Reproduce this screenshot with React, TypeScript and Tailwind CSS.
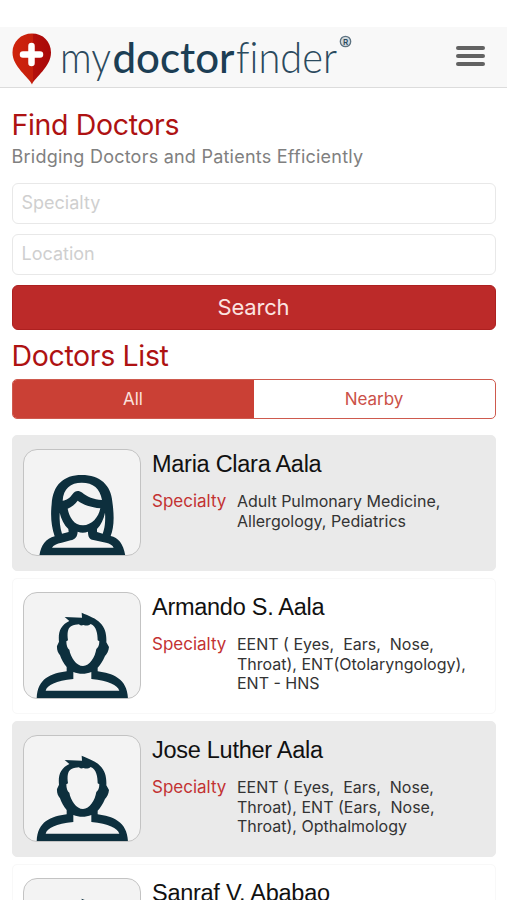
type Doctor = {
  name: string;
  specialties: string[];
  female?: boolean;
};

const doctors: Doctor[] = [
  {
    name: "Maria Clara Aala",
    specialties: ["Adult Pulmonary Medicine,", "Allergology, Pediatrics"],
    female: true,
  },
  {
    name: "Armando S. Aala",
    specialties: [
      "EENT ( Eyes,  Ears,  Nose,",
      "Throat), ENT(Otolaryngology),",
      "ENT - HNS",
    ],
  },
  {
    name: "Jose Luther Aala",
    specialties: [
      "EENT ( Eyes,  Ears,  Nose,",
      "Throat), ENT (Ears,  Nose,",
      "Throat), Opthalmology",
    ],
  },
  { name: "Sanraf V. Ababao", specialties: [] },
];

const FemaleAvatar = () => (
  <svg viewBox="72 60 348 315" className="w-full h-full">
    <path
      fill="#0d2f3d"
      d="M118 378C122 348 137 325 164 319C154 290 151 258 155 222C159 165 190 135 245 135C300 135 333 165 337 215C344 265 341 295 332 318C355 323 371 342 376 378Z"
    />
    <g fill="#f3f3f3">
      <path d="M188 212C190 175 212 158 245 158C280 158 300 175 306 210C280 208 262 200 247 188C235 179 225 182 218 192C208 206 200 210 188 212Z" />
      <path d="M203 236C215 231 225 222 233 212C250 224 272 232 301 235C296 262 275 286 249 286C222 286 208 262 203 236Z" />
      <path d="M179 248C184 268 192 284 205 297L206 306L186 311C180 292 178 272 179 248Z" />
      <path d="M315 248C317 275 314 295 308 311L291 306V297C303 284 311 268 315 248Z" />
      <path d="M156 353C160 345 170 341 185 338L212 331C226 328 232 320 233 305C243 309 253 309 264 305C264 320 268 328 280 330L318 338C330 341 338 345 341 353Z" />
    </g>
  </svg>
);

const MaleAvatar = () => (
  <svg viewBox="70 69 348 315" className="w-full h-full">
    <path
      fill="#0d2f3d"
      d="M192 141L244 143L243 128C265 137 287 146 298 158C314 173 318 193 317 217L325 231C324 243 319 252 313 258C306 274 299 285 291 293V304C335 310 380 325 382 386H108C110 325 150 311 198 304V291C189 281 182 268 178 256C172 248 168 240 169 228L175 215C172 185 180 166 206 153Z"
    />
    <g fill="#f3f3f3">
      <path d="M211 169C220 163 228 165 235 163C239 168 243 166 249 165C256 168 264 167 270 162C287 169 291 190 291 211L296 214C296 226 292 234 287 237C283 262 267 288 247 288C227 288 210 262 206 239C200 236 197 226 197 214L202 211C199 190 201 175 211 169Z" />
      <path d="M135 362C140 345 165 333 218 327V306C235 313 255 313 272 306V327C325 333 350 345 356 362Z" />
    </g>
  </svg>
);

const Logo = () => (
  <svg width="345" height="60" viewBox="10 27 345 60" fill="#2b4a5e">
    <defs>
      <linearGradient id="pin" x1="0" x2="1" y1="0" y2="0">
        <stop offset="0" stopColor="#cf240c" />
        <stop offset="0.52" stopColor="#c61f0c" />
        <stop offset="0.54" stopColor="#b30f0b" />
        <stop offset="1" stopColor="#a90809" />
      </linearGradient>
    </defs>
    <path
      fill="url(#pin)"
      d="M32 84.5C29 77 12.5 67 12.5 52.5C12.5 41.5 21 33.5 32 33.5S51 41.5 51 52.5C51 67 35 77 32 84.5Z"
    />
    <path
      d="M31.500 46V63M23 54.500H40"
      stroke="#fff"
      strokeWidth="6.500"
      strokeLinecap="round"
    />
    <g
      fontFamily="Lato, sans-serif"
      fontSize="43"
      style={{ fontVariantLigatures: "none" }}
    >
      <text x="60" y="73" fontWeight="300" textLength="51" lengthAdjust="spacingAndGlyphs">
        my
      </text>
      <text x="112.500" y="73" fontWeight="500" fill="#1c3e54" textLength="122" lengthAdjust="spacingAndGlyphs">
        doctor
      </text>
      <text x="236" y="73" fontWeight="300" textLength="101" lengthAdjust="spacingAndGlyphs">
        finder
      </text>
    </g>
    <circle cx="345.500" cy="41.500" r="5.200" fill="#d3dade" stroke="#5d7280" strokeWidth="1.300" />
    <text x="345.500" y="44.500" textAnchor="middle" fontFamily="Inter, sans-serif" fontWeight="600" fontSize="8">
      R
    </text>
  </svg>
);

const Heading = ({ children }: { children: string }) => (
  <h2 className="text-[28.5px] leading-9 tracking-[-0.35px] text-[#ae1212] whitespace-nowrap">
    {children}
  </h2>
);

const DoctorCard = ({ doctor, shaded }: { doctor: Doctor; shaded: boolean }) => (
  <div
    className={`flex h-[136px] shrink-0 rounded-[5px] border pl-[10px] pt-[13px] ${
      shaded ? "bg-[#eaeaea] border-[#eaeaea]" : "bg-white border-[#f8f8f8]"
    }`}
  >
    <div className="h-[107px] w-[118px] shrink-0 overflow-hidden rounded-[14px] border-[1.5px] border-[#c3c3c3] bg-[#f3f3f3]">
      {doctor.female ? <FemaleAvatar /> : <MaleAvatar />}
    </div>
    <div className="ml-[11.5px] whitespace-nowrap">
      <p className="font-['Liberation_Sans',sans-serif] text-[23.5px] leading-[30px] tracking-[-0.27px] text-[#111]">
        {doctor.name}
      </p>
      <div className="mt-[12px] flex">
        <p className="w-[85px] text-[17px] leading-5 text-[#c33232]">Specialty</p>
        <div className="mt-px text-[16px] leading-[19.5px] text-[#333] whitespace-pre">
          {doctor.specialties.map((line) => (
            <p key={line}>{line}</p>
          ))}
        </div>
      </div>
    </div>
  </div>
);

export default function App() {
  return (
    <div className="flex h-[900px] w-[507px] flex-col overflow-hidden bg-white font-[Inter,sans-serif]">
      {/* Header */}
      <header className="mt-[27px] flex h-[61px] shrink-0 items-start justify-between border-b border-[#dcdcdc] bg-[#f8f8f8] pl-[10px] pr-[22px]">
        <Logo />
        <button aria-label="Menu" className="mt-[19px] flex flex-col gap-1">
          <span className="h-1 w-[29px] rounded-full bg-[#626262]" />
          <span className="h-1 w-[29px] rounded-full bg-[#626262]" />
          <span className="h-1 w-[29px] rounded-full bg-[#626262]" />
        </button>
      </header>

      <main className="flex flex-col px-[11.5px] pt-[19px]">
        {/* Search */}
        <Heading>Find Doctors</Heading>
        <p className="text-[18px] leading-7 tracking-[0.23px] text-[#808080]">
          Bridging Doctors and Patients Efficiently
        </p>
        <div className="mt-3 flex flex-col gap-[10px]">
          <input
            placeholder="Specialty"
            className="h-[41px] rounded-[6px] border-[1.5px] border-[#e8e8e8] px-[9px] pb-0.5 text-[18px] placeholder:text-[#cfcfcf]"
          />
          <input
            placeholder="Location"
            className="h-[41px] rounded-[6px] border-[1.5px] border-[#e8e8e8] px-[9px] pb-0.5 text-[18px] placeholder:text-[#cfcfcf]"
          />
          <button className="h-[45px] rounded-[6px] border border-[#ad2020] bg-[#bc2a29] text-[22px] tracking-[-0.2px] text-[#fbe4e1]">
            Search
          </button>
        </div>

        {/* Doctors */}
        <div className="mt-2">
          <Heading>Doctors List</Heading>
        </div>
        <div className="mt-[5px] flex h-[40px] overflow-hidden rounded-[5px] border-[1.5px] border-[#ce5a4e] text-[17px]">
          <button className="flex-1 bg-[#ca4035] pt-0.5 text-[#fbe1dc]">All</button>
          <button className="flex-1 pt-0.5 text-[#cb5148]">Nearby</button>
        </div>

        <div className="mt-4 flex flex-col gap-[7px]">
          {doctors.map((doctor, i) => (
            <DoctorCard key={doctor.name} doctor={doctor} shaded={i % 2 === 0} />
          ))}
        </div>
      </main>
    </div>
  );
}
